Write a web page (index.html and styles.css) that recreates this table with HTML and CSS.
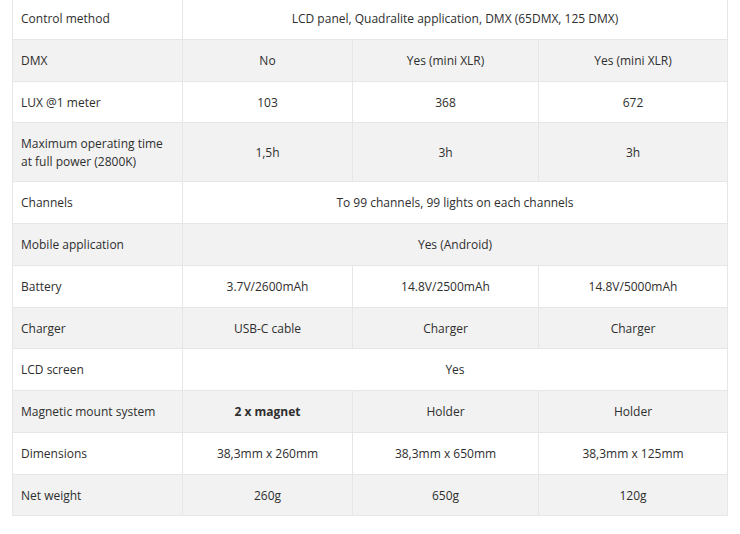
FILE: index.html
```html
<!DOCTYPE html>
<html>
<head>
<meta charset="utf-8">
<link rel="stylesheet" href="styles.css">
</head>
<body>
<table class="specs">
  <colgroup>
    <col class="c-label"><col class="c-a"><col class="c-b"><col class="c-c">
  </colgroup>
  <tbody>
    <tr><td class="label">Control method</td><td colspan="3">LCD panel, Quadralite application, DMX (65DMX, 125 DMX)</td></tr>
    <tr><td class="label">DMX</td><td>No</td><td>Yes (mini XLR)</td><td>Yes (mini XLR)</td></tr>
    <tr><td class="label">LUX @1 meter</td><td>103</td><td>368</td><td>672</td></tr>
    <tr class="tall"><td class="label">Maximum operating time<br>at full power (2800K)</td><td>1,5h</td><td>3h</td><td>3h</td></tr>
    <tr><td class="label">Channels</td><td colspan="3">To 99 channels, 99 lights on each channels</td></tr>
    <tr><td class="label">Mobile application</td><td colspan="3">Yes (Android)</td></tr>
    <tr><td class="label">Battery</td><td>3.7V/2600mAh</td><td>14.8V/2500mAh</td><td>14.8V/5000mAh</td></tr>
    <tr><td class="label">Charger</td><td>USB-C cable</td><td>Charger</td><td>Charger</td></tr>
    <tr><td class="label">LCD screen</td><td colspan="3">Yes</td></tr>
    <tr><td class="label">Magnetic mount system</td><td><strong>2 x magnet</strong></td><td>Holder</td><td>Holder</td></tr>
    <tr><td class="label">Dimensions</td><td>38,3mm x 260mm</td><td>38,3mm x 650mm</td><td>38,3mm x 125mm</td></tr>
    <tr><td class="label">Net weight</td><td>260g</td><td>650g</td><td>120g</td></tr>
  </tbody>
</table>
</body>
</html>
```
FILE: styles.css
```css
html, body {
  margin: 0;
  padding: 0;
  background: #ffffff;
}
body {
  padding: 0 12px;
  font-family: "Open Sans", "Liberation Sans", sans-serif;
  font-size: 12px;
  color: #2e2e2e;
}
.specs {
  width: 715px;
  margin-top: -3px;
  border-collapse: collapse;
  table-layout: fixed;
}
.c-label { width: 170px; }
.c-a { width: 170px; }
.c-b { width: 186px; }
.c-c { width: 189px; }
.specs td {
  border: 1px solid #e6e6e6;
  padding: 1px 8px 0;
  height: 41.75px;
  box-sizing: border-box;
  line-height: 17.5px;
  text-align: center;
  vertical-align: middle;
}
.specs td.label {
  text-align: left;
}
.specs tr:nth-child(even) td {
  background: #f2f2f2;
}
.specs tr.tall td {
  height: 59px;
}
.specs strong {
  font-weight: 700;
}
```
